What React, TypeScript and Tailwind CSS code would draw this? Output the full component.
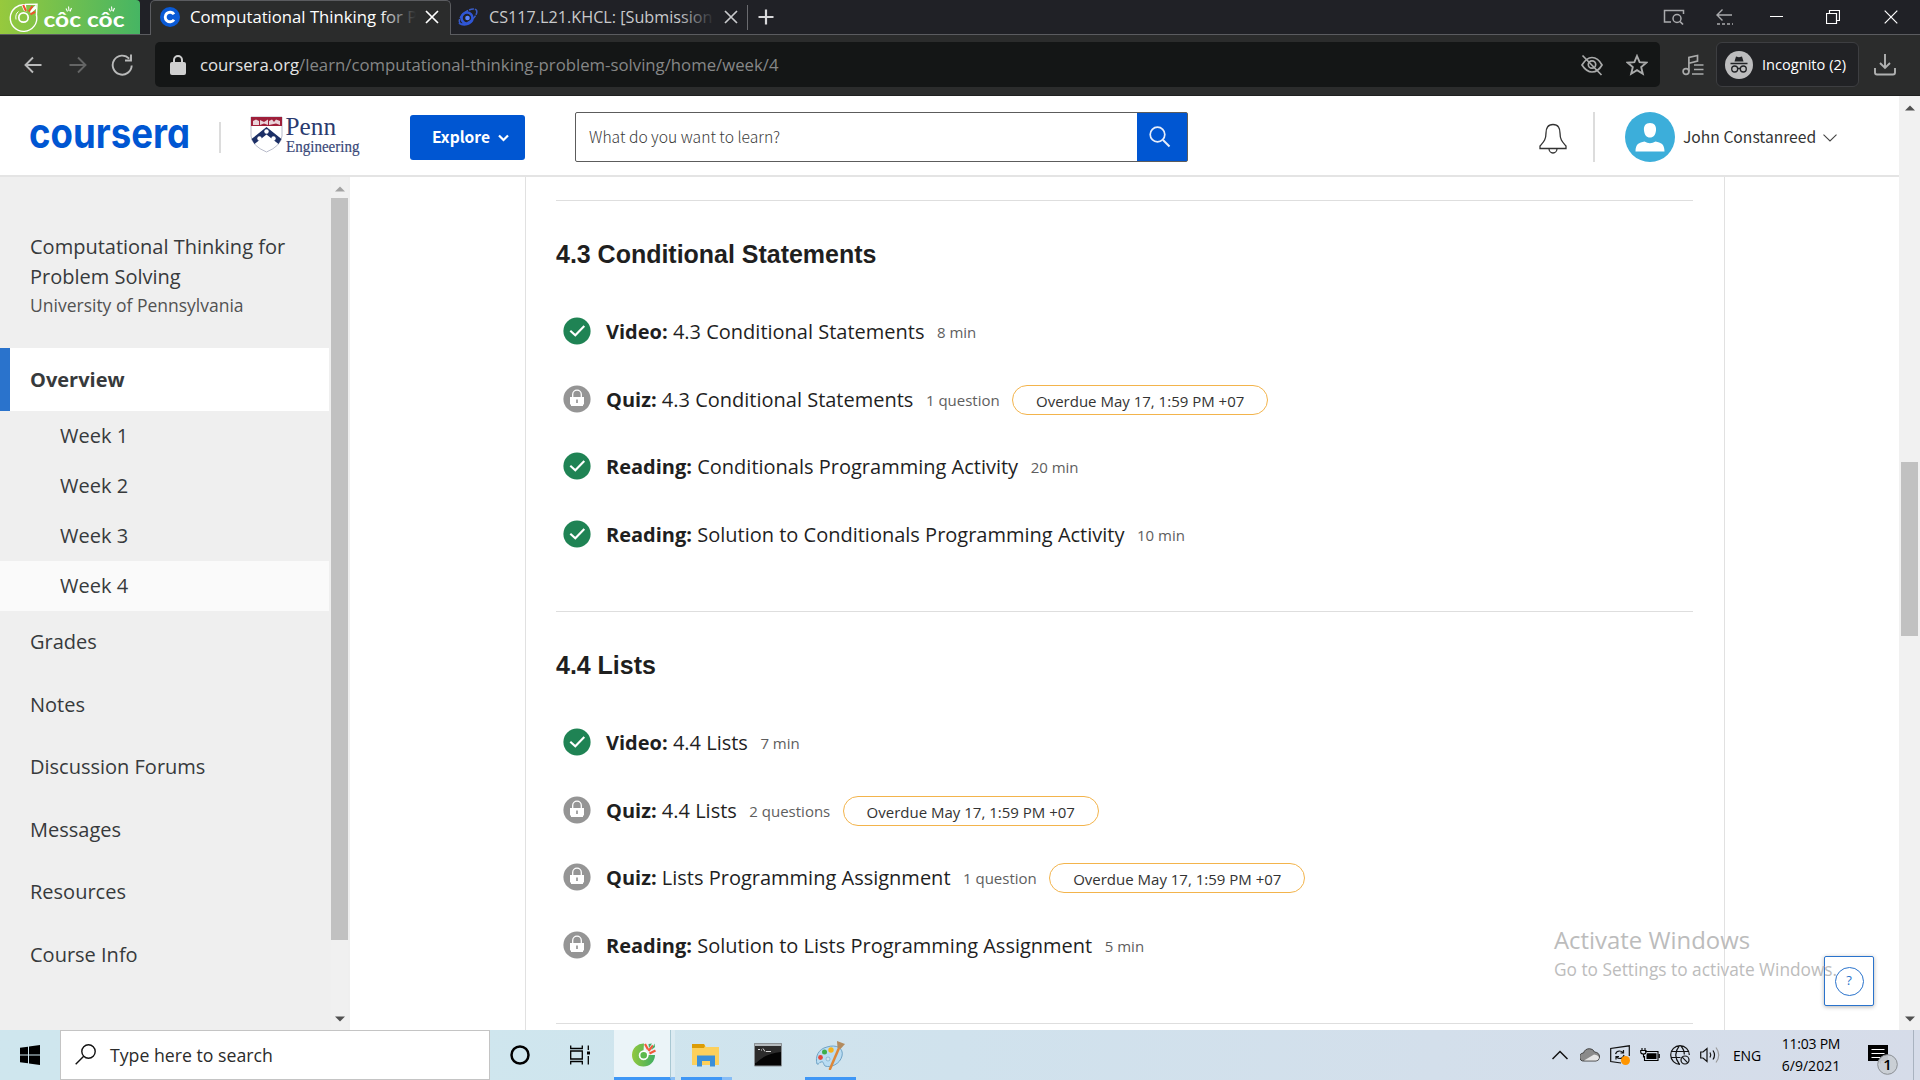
import React from "react";

const UI = "font-['Open_Sans','Noto_Sans',sans-serif]";
const SOURCE = "font-['Noto_Sans_CJK_SC','Noto_Sans',sans-serif]";

type Item = {
  done: boolean;
  kind: string;
  title: string;
  meta: string;
  overdue?: boolean;
};

const sections: { title: string; items: Item[] }[] = [
  {
    title: "4.3 Conditional Statements",
    items: [
      { done: true, kind: "Video:", title: "4.3 Conditional Statements", meta: "8 min" },
      { done: false, kind: "Quiz:", title: "4.3 Conditional Statements", meta: "1 question", overdue: true },
      { done: true, kind: "Reading:", title: "Conditionals Programming Activity", meta: "20 min" },
      { done: true, kind: "Reading:", title: "Solution to Conditionals Programming Activity", meta: "10 min" },
    ],
  },
  {
    title: "4.4 Lists",
    items: [
      { done: true, kind: "Video:", title: "4.4 Lists", meta: "7 min" },
      { done: false, kind: "Quiz:", title: "4.4 Lists", meta: "2 questions", overdue: true },
      { done: false, kind: "Quiz:", title: "Lists Programming Assignment", meta: "1 question", overdue: true },
      { done: false, kind: "Reading:", title: "Solution to Lists Programming Assignment", meta: "5 min" },
    ],
  },
];

function CocCocLogo() {
  return (
    <svg width="140" height="34" viewBox="0 0 140 34" className="block shrink-0">
      <defs>
        <linearGradient id="cc" x1="0" y1="0" x2="1" y2="0">
          <stop offset="0" stopColor="#97c93d" />
          <stop offset="1" stopColor="#46b563" />
        </linearGradient>
      </defs>
      <path d="M0 0H136Q140 0 140 4V34H0Z" fill="url(#cc)" />
      <path d="M26 5A13.3 13.3 0 1 0 36.6 15.5M25 4.4L37 4.2L36.4 16" fill="none" stroke="#fff" strokeWidth="1.4" />
      <circle cx="23.5" cy="17.5" r="4.7" fill="none" stroke="#fff" strokeWidth="1.7" />
      <path d="M18.5 11.5Q15 14 16 19.5" fill="none" stroke="#fff" strokeWidth="1" />
      <path d="M21.5 5.6L26 4.6L26.6 11.5L24 11Z" fill="#fff" />
      <path d="M30 10.6L36 4.8L36.4 8.4L30.6 13.6Z" fill="#fff" />
      <path d="M23.2 5L26 11M28.8 11.5L32.5 6M30.5 14.3L35 11.8" stroke="#f0512d" strokeWidth="2" />
      <text x="43.5" y="27.3" fontSize="21" fontWeight="700" fill="#fff" textLength="37.5" lengthAdjust="spacingAndGlyphs" fontFamily="Lato">côc</text>
      <text x="87" y="27.3" fontSize="21" fontWeight="700" fill="#fff" textLength="37.5" lengthAdjust="spacingAndGlyphs" fontFamily="Lato">côc</text>
      <path d="M66 8.5L67.5 11.5M68.5 6.5L69 11M71.5 8L70 11.5M109 8.5L110.5 11.5M111.5 6.5L112 11M114.5 8L113 11.5" stroke="#fff" strokeWidth="1.1" fill="none" />
    </svg>
  );
}

function CloseX({ className }: { className: string }) {
  return (
    <svg width="14" height="14" viewBox="0 0 14 14" className={className}>
      <path d="M1 1L13 13M13 1L1 13" stroke="currentColor" strokeWidth="1.7" />
    </svg>
  );
}

function TabBar() {
  return (
    <div className="flex h-[35px] items-start border-b border-[#5b5c60] bg-[#202126]">
      <CocCocLogo />
      <div className="relative ml-[10px] flex h-[35px] w-[301px] items-center rounded-t-[5px] border border-b-0 border-[#5b5c60] bg-[#2b2c2c] pl-[9px] pb-[6px]">
        <svg width="20" height="20" viewBox="0 0 20 20" className="mt-[4px] shrink-0">
          <circle cx="10" cy="10" r="10" fill="#0a5ad6" />
          <path d="M14 7.3A4.8 4.8 0 1 0 14 12.7" fill="none" stroke="#fff" strokeWidth="2.9" />
        </svg>
        <span className="relative ml-[10px] mt-[4px] w-[226px] overflow-hidden text-[16.7px] leading-[24px] whitespace-nowrap text-white">
          Computational Thinking for P
          <span className="absolute inset-y-0 right-0 w-[36px] bg-gradient-to-r from-transparent to-[#2b2c2c]" />
        </span>
        <CloseX className="mt-[4px] ml-[9px] shrink-0 text-white" />
      </div>
      <div className="flex h-[34px] items-center pl-[6px]">
        <svg width="22" height="20" viewBox="0 0 22 20">
          <ellipse cx="11" cy="9.5" rx="10.5" ry="5" transform="rotate(-38 11 9.5)" fill="none" stroke="#3a5cc4" strokeWidth="1.5" strokeDasharray="5 1" />
          <circle cx="10" cy="11" r="5.5" fill="none" stroke="#2f56d6" strokeWidth="2.6" />
          <circle cx="10.5" cy="11" r="2.3" fill="#5b86ff" />
          <path d="M2 16Q7 19.5 13 16" stroke="#2f56d6" strokeWidth="2" fill="none" />
        </svg>
        <span className="relative ml-[10px] w-[226px] overflow-hidden text-[16.2px] leading-[24px] whitespace-nowrap text-[#c9cacc]">
          CS117.L21.KHCL: [Submission
          <span className="absolute inset-y-0 right-0 w-[36px] bg-gradient-to-r from-transparent to-[#202126]" />
        </span>
        <CloseX className="ml-[9px] text-[#c9cacc]" />
        <span className="ml-[9px] h-[25px] w-px bg-[#6a6b6f]" />
        <svg width="16" height="16" viewBox="0 0 16 16" className="ml-[10px] text-[#d8d8da]">
          <path d="M8 .5V15.5M.5 8H15.5" stroke="currentColor" strokeWidth="2.2" />
        </svg>
      </div>
      <div className="ml-auto flex h-[34px] items-center pr-[22px]">
        <svg width="22" height="18" viewBox="0 0 22 18" className="mr-[30px] text-[#a9aaad]" fill="none" stroke="currentColor">
          <path d="M8 14H1.5V2.5H20.5V6" strokeWidth="1.5" />
          <circle cx="14" cy="10.5" r="4" strokeWidth="1.5" />
          <path d="M17 13.5L20 16.5" strokeWidth="1.7" />
        </svg>
        <svg width="18" height="18" viewBox="0 0 18 18" className="mr-[37px] text-[#a9aaad]" fill="none" stroke="currentColor" strokeWidth="1.4">
          <path d="M17 7H2M7.5 1.5L2 7L7.500 12.500" />
          <path d="M2 16H18" strokeDasharray="3 2" strokeWidth="1.6" />
        </svg>
        <svg width="13" height="13" viewBox="0 0 13 13" className="mr-[43px]">
          <path d="M0 5.5H13" stroke="#fff" />
        </svg>
        <svg width="14" height="14" viewBox="0 0 14 14" className="mr-[44px]" fill="none" stroke="#fff">
          <path d="M.5 3.5H10.5V13.5H.5ZM3.5 3.5V.5H13.5V10.5H10.5" strokeWidth="1.2" />
        </svg>
        <svg width="14" height="14" viewBox="0 0 14 14">
          <path d="M.7 .7L13.3 13.3M13.3 .7L.7 13.3" stroke="#fff" strokeWidth="1.2" />
        </svg>
      </div>
    </div>
  );
}

function Toolbar() {
  return (
    <div className="flex h-[61px] items-start border-b border-[#1f2020] bg-[#2b2c2c] pt-[7px]">
      <div className="flex h-[45px] w-[155px] items-center pl-[24px]">
        <svg width="18" height="18" viewBox="0 0 18 18" fill="none" stroke="#b9baba" strokeWidth="1.9">
          <path d="M17.5 9H2M9 1.5L1.5 9L9 16.5" />
        </svg>
        <svg width="18" height="18" viewBox="0 0 18 18" fill="none" stroke="#646565" strokeWidth="1.9" className="ml-[27px]">
          <path d="M.5 9H16M9 1.5L16.5 9L9 16.5" />
        </svg>
        <svg width="22" height="22" viewBox="0 0 22 22" fill="none" stroke="#b9baba" strokeWidth="1.9" className="ml-[24px]">
          <path d="M20.7 11.5A9.5 9.5 0 1 1 18.2 4.7" />
          <path d="M20 .5V6.5H14" />
        </svg>
      </div>
      <div className="flex h-[45px] w-[1505px] items-center rounded-[5px] bg-[#141616] pl-[15px]">
        <svg width="16" height="20" viewBox="0 0 16 20">
          <rect x="0" y="7" width="16" height="13" rx="2" fill="#d0d0d0" />
          <path d="M4 8V5A4 4 0 0 1 12 5V8" fill="none" stroke="#d0d0d0" strokeWidth="2" />
        </svg>
        <span className="ml-[14px] text-[16.74px] leading-[24px] text-[#868787]">
          <span className="text-[#e4e4e4]">coursera.org</span>/learn/computational-thinking-problem-solving/home/week/4
        </span>
        <svg width="22" height="22" viewBox="0 0 22 22" fill="none" stroke="#a9aaaa" strokeWidth="1.7" className="ml-auto">
          <path d="M1 11Q5.5 3.5 11 3.5Q17 3.5 21 11Q17 18 11 18Q5.5 18 1 11ZM1.5 1.5L20.5 21" />
          <circle cx="11" cy="10.5" r="3.7" />
        </svg>
        <svg width="22" height="22" viewBox="0 0 22 22" fill="none" stroke="#a9aaaa" strokeWidth="1.9" className="mr-[12px] ml-[23px]">
          <path d="M11 2L13.6 8.2L20.3 8.7L15.2 13.1L16.8 19.7L11 16.1L5.2 19.7L6.8 13.1L1.7 8.7L8.4 8.2Z" />
        </svg>
      </div>
      <svg width="22" height="22" viewBox="0 0 22 22" fill="none" stroke="#a9aaaa" strokeWidth="1.7" className="mt-[12px] ml-[22px]">
        <circle cx="4" cy="17.5" r="2.9" />
        <path d="M6.9 17.5V3.5L15.5 1.5V7L7 9.2M12 11H21.5M12 15.5H21.5M10 20H21.5" />
      </svg>
      <div className="ml-[12px] flex h-[45px] w-[143px] items-center rounded-[6px] border border-[#3d3e41] bg-[#212225] pl-[8px]">
        <svg width="28" height="28" viewBox="0 0 28 28" className="shrink-0">
          <circle cx="14" cy="14" r="14" fill="#bdbdbe" />
          <path d="M9.5 10.5L11 5.5L14 6.2L17 5.5L18.5 10.5Z" fill="#212225" />
          <path d="M5.5 12.5H22.5M12.5 17.5H15.5" stroke="#212225" strokeWidth="1.3" />
          <circle cx="9.7" cy="18" r="3" fill="none" stroke="#212225" strokeWidth="1.3" />
          <circle cx="18.3" cy="18" r="3" fill="none" stroke="#212225" strokeWidth="1.3" />
        </svg>
        <span className="-mt-px ml-[9px] text-[14.6px] leading-[22px] whitespace-nowrap text-white">Incognito (2)</span>
      </div>
      <svg width="22" height="22" viewBox="0 0 22 22" fill="none" stroke="#b0b1b1" strokeWidth="1.9" className="mt-[12px] ml-[15px]">
        <path d="M11 0V14M6 9L11 14L16 9M1 14V18.5Q1 20.5 3 20.5H19Q21 20.5 21 18.5V14" />
      </svg>
    </div>
  );
}

function PennLogo() {
  return (
    <svg width="112" height="42" viewBox="0 0 112 42" className="block overflow-visible">
      <path d="M1 1H32V20Q31 30 16.5 36Q2 30 1 20Z" fill="#fff" stroke="#b9bccb" />
      <path d="M1 1H32V10H1Z" fill="#9f1f3a" />
      <path d="M3 9V5L6 3.5L9 5V9ZM10 9V4L14 6L18 3.5V9L14 7.5ZM19 9V5L22 3.500L24 6L26 3.500L30 5V9L26 7.500Z" fill="#ead3da" />
      <path d="M16.5 11L31.5 23L28.5 28L16.5 18.5L4.5 28L1.5 23Z" fill="#1c2f66" />
      <circle cx="16.5" cy="15.5" r="2.2" fill="#fff" />
      <circle cx="9.5" cy="22.5" r="2.2" fill="#fff" />
      <circle cx="23.5" cy="22.5" r="2.2" fill="#fff" />
      <text x="35.5" y="19" fontSize="26" fill="#2b3a6e" textLength="50.5" lengthAdjust="spacingAndGlyphs" fontFamily="Liberation Serif">Penn</text>
      <text x="36" y="35.5" fontSize="17.5" fill="#3a4878" stroke="#3a4878" strokeWidth=".2" textLength="73.5" lengthAdjust="spacingAndGlyphs" fontFamily="Liberation Serif">Engineering</text>
    </svg>
  );
}

function SiteHeader() {
  return (
    <header className={`flex h-[81px] w-[1899px] items-center border-b-2 border-[#e4e4e4] bg-white pt-[3px] ${SOURCE}`}>
      <svg width="162" height="40" viewBox="0 0 162 40" className="ml-[29px] block overflow-visible">
        <text x="0" y="30.5" fontSize="41" fontWeight="700" fill="#0056d2" textLength="161" lengthAdjust="spacingAndGlyphs" fontFamily="Inter" className="[font-feature-settings:'cv11']">coursera</text>
      </svg>
      <span className="ml-[28px] h-[31px] w-[2px] bg-[#dcdcdc]" />
      <div className="ml-[29px]">
        <PennLogo />
      </div>
      <button className="ml-[48px] flex h-[45px] w-[115px] items-center rounded-[3px] bg-[#0056d2] pl-[22px] text-[15.6px] font-bold text-white">
        Explore
        <svg width="11" height="8" viewBox="0 0 11 8" fill="none" stroke="#fff" strokeWidth="2.2" className="mt-[2px] ml-[8px]">
          <path d="M1 1.5L5.5 6L10 1.5" />
        </svg>
      </button>
      <div className="ml-[50px] flex h-[50px] w-[613px] rounded-[2px] border border-[#5c5c5c]">
        <span className="flex flex-1 items-center pl-[13px] text-[15.65px] font-light text-[#3a3a3a]">What do you want to learn?</span>
        <span className="flex w-[50px] items-center bg-[#0056d2] pl-[12px]">
          <svg width="22" height="22" viewBox="0 0 22 22" fill="none" stroke="#e8eefb" strokeWidth="1.7">
            <circle cx="8.5" cy="8.5" r="7.3" />
            <path d="M14 14L20.5 20.5" strokeWidth="2" />
          </svg>
        </span>
      </div>
      <svg width="30" height="32" viewBox="0 0 30 32" fill="none" stroke="#333" strokeWidth="1.3" className="mt-[4px] ml-[350px]">
        <path d="M15 1.5C9.5 1.5 8 5.5 8 10C8 17 5.5 19 2 23V25.5H28V23C24.5 19 22 17 22 10C22 5.5 20.5 1.5 15 1.5Z" />
        <path d="M11 25.5A4 4.5 0 0 0 19 25.5" />
      </svg>
      <span className="ml-[25px] h-[50px] w-[2px] bg-[#dcdcdc]" />
      <svg width="50" height="50" viewBox="0 0 50 50" className="ml-[30px]">
        <circle cx="25" cy="25" r="25" fill="#3caeda" />
        <path d="M25 11C29.5 11 31.5 14 31 18.5C30.5 23 28.5 25.5 25 25.5C21.5 25.5 19.5 23 19 18.5C18.5 14 20.5 11 25 11ZM10.5 39.5C10.5 32 14 30.5 19.5 29.5Q25 33 30.5 29.5C36 30.5 39.5 32 39.5 39.5Z" fill="#fff" />
      </svg>
      <span className="ml-[8px] text-[15.65px] text-[#333]">John Constanreed</span>
      <svg width="14" height="8" viewBox="0 0 14 8" fill="none" stroke="#444" strokeWidth="1.1" className="mt-[2px] ml-[7px]">
        <path d="M.5 .7L7 7L13.5 .7" />
      </svg>
    </header>
  );
}

function Arrow({ up, className }: { up?: boolean; className: string }) {
  return (
    <svg width="10" height="6" viewBox="0 0 10 6" className={className}>
      <path d={up ? "M0 5.5L5 .5L10 5.5Z" : "M0 .5L5 5.5L10 .5Z"} fill="currentColor" />
    </svg>
  );
}

function Sidebar() {
  return (
    <aside className="flex w-[350px] shrink-0 bg-[#efefef] text-[20px] text-[#373a3c]">
      <div className="w-[329px]">
        <div className="h-[171px] pt-[55px] pl-[30px] leading-[30px]">
          <div>Computational Thinking for</div>
          <div>Problem Solving</div>
          <div className="text-[17.5px] leading-[26px] text-[#525252]">University of Pennsylvania</div>
        </div>
        <div className="flex h-[63px] items-center border-l-[10px] border-[#2a73cc] bg-white pl-[20px] font-bold">Overview</div>
        {["Week 1", "Week 2", "Week 3", "Week 4"].map((w) => (
          <div key={w} className={`flex h-[50px] items-center pl-[60px] ${w === "Week 4" ? "bg-[#fafafa]" : ""}`}>
            {w}
          </div>
        ))}
        {["Grades", "Notes", "Discussion Forums", "Messages", "Resources", "Course Info"].map((w) => (
          <div key={w} className="flex h-[62.5px] items-center pl-[30px]">
            {w}
          </div>
        ))}
      </div>
      <div className="ml-[2px] flex w-[17px] flex-col items-center bg-[#f0f0f0]">
        <Arrow up className="mt-[9px] text-[#a3a3a3]" />
        <div className="mt-[6px] h-[742px] w-[17px] bg-[#c1c1c1]" />
        <Arrow className="mt-auto mb-[8px] text-[#505050]" />
      </div>
    </aside>
  );
}

function StatusIcon({ done }: { done: boolean }) {
  return done ? (
    <svg width="28" height="28" viewBox="0 0 28 28" className="block shrink-0">
      <circle cx="14" cy="14" r="13.6" fill="#1f8354" />
      <path d="M7.3 13.8L12.3 18.3L21.3 9" fill="none" stroke="#fff" strokeWidth="2.1" />
    </svg>
  ) : (
    <svg width="28" height="28" viewBox="0 0 28 28" className="block shrink-0">
      <circle cx="14" cy="14" r="13.6" fill="#959595" />
      <path d="M7 12H21V19.5H20V21H8V19.5H7Z" fill="#fff" />
      <path d="M9.7 13V9.5A4.3 4.3 0 0 1 18.3 9.5V13" fill="none" stroke="#fff" strokeWidth="1.3" />
      <path d="M14 14.5V18" stroke="#959595" strokeWidth="1.7" />
    </svg>
  );
}

function Row({ item }: { item: Item }) {
  return (
    <div className="flex h-[67.5px] items-center pl-[7px]">
      <StatusIcon done={item.done} />
      <span className="mt-[2px] ml-[15px] text-[20px] leading-[30px] whitespace-nowrap text-[#1f1f1f]">
        <b>{item.kind}</b> {item.title}
      </span>
      <span className="mt-[2px] ml-[12.5px] text-[15px] leading-[22px] whitespace-nowrap text-[#5e5e5e]">{item.meta}</span>
      {item.overdue && (
        <span className="mt-[2px] ml-[12.5px] flex h-[30px] w-[256px] items-center justify-center rounded-full border border-[#f3b44c] pt-[2px] text-[15px] leading-[22px] whitespace-nowrap text-[#333]">
          Overdue May 17, 1:59 PM +07
        </span>
      )}
    </div>
  );
}

function Lessons() {
  return (
    <main className="ml-[175px] h-[853px] w-[1200px] overflow-hidden border-x border-[#e1e1e1] bg-white pt-[23px] pr-[31px] pl-[30px]">
      {sections.map((s) => (
        <section key={s.title} className="h-[411px] border-t border-[#dedede] last-of-type:h-[412px]">
          <h2 className="mt-[38px] mb-[28.5px] font-['Liberation_Sans',Arial,sans-serif] text-[25px] leading-[30px] font-bold tracking-[-0.02px] text-[#1f1f1f]">{s.title}</h2>
          {s.items.map((i) => (
            <Row key={i.kind + i.title} item={i} />
          ))}
        </section>
      ))}
      <div className="h-px bg-[#dedede]" />
    </main>
  );
}

function CocCocIcon() {
  return (
    <svg width="26" height="26" viewBox="0 0 26 26">
      <defs>
        <linearGradient id="ci" x1="0" y1="0" x2="1" y2="0">
          <stop offset="0" stopColor="#92c83e" />
          <stop offset="1" stopColor="#3fae62" />
        </linearGradient>
      </defs>
      <path d="M13 2.5A11.5 11.5 0 1 0 24 14L17.5 14A4.9 4.9 0 1 1 12.5 9.5Z" fill="url(#ci)" />
      <circle cx="12.7" cy="14.3" r="4" fill="#5bb94d" stroke="#fff" strokeWidth="1.4" />
      <path d="M14 3L17 8.5M17.5 10L22 4.5M18.5 12.5L24.5 9.5" stroke="#f0593a" strokeWidth="2.2" />
      <path d="M17.5 3L21 2.5L18 7ZM23.5 2.5L24 6L20.5 9Z" fill="#3fae62" />
    </svg>
  );
}

function Taskbar() {
  return (
    <footer className="flex h-[50px] bg-linear-to-r from-[#cfe6ee] from-25% via-[#d0e2ed] via-50% to-[#d6dce9] text-black">
      <div className="flex w-[60px] items-center justify-center">
        <svg width="20" height="20" viewBox="0 0 20 20">
          <path d="M0 2.8L8 1.7V9.5H0ZM9 1.5L20 0V9.5H9ZM0 10.5H8V18.3L0 17.2ZM9 10.5H20V20L9 18.5Z" />
        </svg>
      </div>
      <div className="flex w-[430px] items-center border border-[#c4c4c4] bg-white pl-[14px]">
        <svg width="21" height="21" viewBox="0 0 21 21" fill="none" stroke="#111" strokeWidth="1.4" className="-mt-px">
          <circle cx="13.5" cy="7.5" r="6.7" />
          <path d="M8.7 12.3L.7 20.3" />
        </svg>
        <span className="ml-[14px] text-[17.7px] leading-[26px] text-[#2b2b2b]">Type here to search</span>
      </div>
      <div className="flex w-[60px] items-center justify-center">
        <svg width="20" height="20" viewBox="0 0 20 20">
          <circle cx="10" cy="10" r="8.5" fill="none" stroke="#000" strokeWidth="2.5" />
        </svg>
      </div>
      <div className="flex w-[64px] items-center pl-[20px]">
        <svg width="21" height="20" viewBox="0 0 21 20" fill="none" stroke="#000" strokeWidth="1.3" className="-mt-px">
          <path d="M.7 .5V3.5H12.3V.5M.7 6H12.3V14H.7ZM.7 19.5V16.5H12.3V19.5M18.3 .5V5M18.3 11V19.5" />
          <path d="M17 6.5H20V9.5H17Z" fill="#000" stroke="none" />
        </svg>
      </div>
      <div className="flex w-[61px]">
        <div className="flex w-[57px] items-center justify-center border-r border-b-[3px] border-r-[#a9c8d3] border-b-[#3f97f6] bg-[#ebf4f8] pl-[4px]">
          <CocCocIcon />
        </div>
        <div className="w-[4px] border-b-[3px] border-[#87bdf6] bg-[#dcebf2]" />
      </div>
      <div className="relative ml-[6px] flex w-[51px] items-center justify-center pr-[2px]">
        <svg width="28" height="24" viewBox="0 0 28 24" className="-mt-px">
          <path d="M0 1H12L14 4H27V22H0Z" fill="#fcd05c" />
          <path d="M0 1H12L13 3L12 5H0Z" fill="#dc9c05" />
          <path d="M5 12.5H23V23.5H18V18H10V23.5H5Z" fill="#3a8fd9" />
        </svg>
        <span className="absolute bottom-0 left-0 h-[3px] w-[41px] bg-[#3f97f6]" />
        <span className="absolute right-0 bottom-0 h-[3px] w-[10px] bg-[#87bdf6]" />
      </div>
      <div className="flex w-[73px] items-center justify-center pr-[2px]">
        <svg width="28" height="24" viewBox="0 0 28 24" className="-mt-px">
          <path d="M.5 .5H27.5V23H.5Z" fill="#050505" stroke="#8a9094" />
          <path d="M1 1H27V3H1Z" fill="#b5bbbe" />
          <path d="M1 3H27V9Q12 10 2 20H1Z" fill="#2c2c2c" />
          <path d="M4 6.5H6M7 7H8M9 5.5L11 8.5M12 8.5H17" stroke="#d5d5d5" />
        </svg>
      </div>
      <div className="relative flex w-[51px] items-center justify-center">
        <svg width="31" height="30" viewBox="0 0 31 30">
          <path d="M2 24C0 17 3 9 12 7C21 4 29 8 27 16C25 24 16 28 10 26C8 24 9 21 6 22C4 22 4 25 2 24Z" fill="#b9dcf2" stroke="#6fa3c6" />
          <circle cx="13" cy="19" r="2" fill="#d0e5ee" stroke="#6fa3c6" strokeWidth=".6" />
          <circle cx="5.5" cy="17.5" r="2.4" fill="#e5483a" />
          <circle cx="9.5" cy="12" r="2.5" fill="#3cae4a" />
          <circle cx="16" cy="10" r="2.7" fill="#f5b31c" />
          <path d="M24 8L15 29" stroke="#dd8738" strokeWidth="2.5" strokeLinecap="round" />
          <path d="M22 1L30 4L25.5 9L22.5 7.5Z" fill="#b38b5e" />
        </svg>
        <span className="absolute bottom-0 left-0 h-[3px] w-[51px] bg-[#3f97f6]" />
      </div>
      <div className="ml-auto flex items-center">
        <svg width="16" height="10" viewBox="0 0 16 10" fill="none" stroke="#111" strokeWidth="1.5">
          <path d="M.5 9L8 1.5L15.5 9" />
        </svg>
        <svg width="20" height="14" viewBox="0 0 20 14" className="ml-[12px]">
          <path d="M4 13A4 4 0 0 1 3.5 5Q5 .7 9.5 .7Q13 .7 14.5 4Q19.5 4.5 19.5 9Q19 13 16 13Z" fill="#8b8b8b" stroke="#444" />
          <path d="M4 12.5L14 6.5Q19 7 19 10Q18 12.5 16 12.5Z" fill="#e6e6e6" />
        </svg>
        <svg width="20" height="20" viewBox="0 0 20 20" fill="none" stroke="#111" strokeWidth="1.2" className="ml-[10px]">
          <path d="M19.3 11V.8L.7 3.5V16.5L11 18" />
          <path d="M5.5 9Q6.5 6 9.5 6Q11.5 6 13 7.5M13.5 5V8H10.5M14 10Q13 13.5 10 13.5Q8 13.5 6.5 12M6 14.5V11.5H9" />
          <circle cx="15.5" cy="15.5" r="4.5" fill="#ff9500" stroke="none" />
        </svg>
        <svg width="20" height="14" viewBox="0 0 20 14" fill="none" stroke="#000" className="ml-[10px]">
          <path d="M5 3.5H18V12.5H4.5V8M2 0V2M5 0V2M.7 2.5H6V4Q6 6 3.5 6Q.7 6 .7 4ZM3.5 6V9H4.5M19.3 6V10" strokeWidth="1.1" />
          <path d="M7 5.2H16.5V11H6.500V7Z" fill="#000" stroke="none" />
        </svg>
        <svg width="20" height="20" viewBox="0 0 20 20" fill="none" stroke="#111" strokeWidth="1.2" className="ml-[10px]">
          <path d="M10 19.3A9.3 9.3 0 1 1 19.3 10M1.5 6.5H18.5M1 12.5H10.5M9.5 .7Q2 10 9.5 19.3M10.5 .7Q14.5 5 14.3 9.5" />
          <circle cx="15" cy="15" r="4" />
          <path d="M12.2 12.2L17.8 17.8" />
        </svg>
        <svg width="20" height="18" viewBox="0 0 20 18" fill="none" stroke="#111" strokeWidth="1.2" className="ml-[10px]">
          <path d="M.7 6H3L7 2.5V15.5L3 12H.7ZM10 6.5Q11.5 9 10 11.5M13 4.5Q16 9 13 13.5" />
          <path d="M16 1.5Q21.5 9 16 16.5" stroke="#999" />
        </svg>
        <span className="ml-[13px] mt-px w-[28px] text-[14px] leading-[20px] tracking-[-0.2px] whitespace-nowrap">ENG</span>
        <div className="ml-[20px] flex w-[60px] flex-col items-center text-[14px] leading-[22.5px] whitespace-nowrap">
          <span className="tracking-[-0.25px]">11:03 PM</span>
          <span>6/9/2021</span>
        </div>
        <svg width="31" height="32" viewBox="0 0 31 32" className="mt-[9px] ml-[27px]">
          <path d="M0 1H20V17H13V20L10 17H0Z" />
          <path d="M3.5 5.5H16.5M3.5 9.5H16.5M3.5 13.5H12" stroke="#fff" strokeWidth="1.1" />
          <circle cx="19.5" cy="20.5" r="9.8" fill="#c9ced4" fillOpacity=".95" stroke="#8b8f94" />
          <text x="19.5" y="26" fontSize="15" textAnchor="middle" fontFamily="Open Sans" fontWeight="600">1</text>
        </svg>
        <span className="ml-[14px] h-[50px] w-px bg-[#a9b3c0]" />
        <span className="w-[6px]" />
      </div>
    </footer>
  );
}

export default function App() {
  return (
    <div className={`relative flex h-[1080px] w-[1920px] flex-col overflow-hidden bg-white ${UI}`}>
      <TabBar />
      <Toolbar />
      <div className="flex h-[934px]">
        <div className="w-[1899px]">
          <SiteHeader />
          <div className="flex h-[853px]">
            <Sidebar />
            <Lessons />
          </div>
        </div>
        <div className="flex w-[21px] flex-col items-center bg-[#f1f1f1]">
          <Arrow up className="mt-[9px] text-[#505050]" />
          <div className="mt-[351px] h-[174px] w-[17px] bg-[#c1c1c1]" />
          <Arrow className="mt-auto mb-[8px] text-[#505050]" />
        </div>
      </div>
      <Taskbar />
      <button className="absolute top-[956px] left-[1824px] flex h-[50px] w-[50px] items-center justify-center rounded-[2px] border border-[#2a73cc] bg-white shadow-[0_1px_4px_rgba(0,0,0,0.3)]">
        <span className="flex h-[29px] w-[29px] items-center justify-center rounded-full border border-[#2a73cc] text-[13px] text-[#2a73cc]">?</span>
      </button>
      <div className="absolute top-[922px] left-[1554px] whitespace-nowrap text-[#bcbcbc]">
        <div className="text-[23.9px] leading-[36px]">Activate Windows</div>
        <div className="text-[17.3px] leading-[24px]">Go to Settings to activate Windows.</div>
      </div>
    </div>
  );
}
